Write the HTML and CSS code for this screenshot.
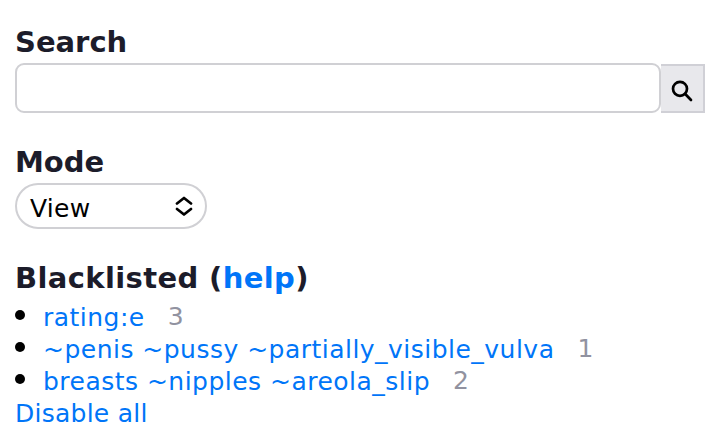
FILE: index.html
```html
<!DOCTYPE html>
<html lang="en">
<head>
<meta charset="utf-8">
<title>Sidebar</title>
<link rel="stylesheet" href="styles.css">
</head>
<body>
<aside class="sidebar">
  <section class="search">
    <h2>Search</h2>
    <form class="search-form">
      <input class="search-input" type="text" aria-label="Search">
      <button class="search-button" type="button" aria-label="Submit">
        <svg viewBox="0 0 22 22" width="22" height="22"><circle cx="9" cy="8.800" r="7"/><path d="M14.200 14l5.800 6"/></svg>
      </button>
    </form>
  </section>
  <section class="mode">
    <h2>Mode</h2>
    <div class="select"><span class="value">View</span>
      <svg viewBox="0 0 18 20" width="18" height="20"><path d="M2 7.500L9 2l7 5.500M2 13l7 5.500 7-5.500"/></svg>
    </div>
  </section>
  <section class="blacklist">
    <h2>Blacklisted (<a href="#">help</a>)</h2>
    <ul>
      <li><a href="#">rating:e</a><span class="count">3</span></li>
      <li><a href="#">~penis ~pussy ~partially_visible_vulva</a><span class="count">1</span></li>
      <li><a href="#">breasts ~nipples ~areola_slip</a><span class="count">2</span></li>
    </ul>
    <a class="disable" href="#">Disable all</a>
  </section>
</aside>
</body>
</html>
```
FILE: styles.css
```css
* { box-sizing: border-box; }
body {
  margin: 0;
  background: #fff;
  color: #1c1c2a;
  font-family: Verdana, "DejaVu Sans", sans-serif;
  font-size: 25px;
  overflow: hidden;
}
.sidebar { padding: 22px 15px 0; }
h2 { margin: 0; font-size: 29px; line-height: 40px; height: 41px; white-space: nowrap; }
a { color: #0075f8; text-decoration: none; }
.search-form { display: flex; height: 50px; margin: 0; }
.search-input {
  flex: 1;
  min-width: 0;
  border: 2px solid #d0d0d4;
  border-radius: 9px;
  background: #fff;
}
.search-button {
  width: 44px;
  height: 49px;
  margin-top: 1px;
  padding: 4px 0 0;
  border: 2px solid #d0d0d6;
  border-left: 0;
  background: #e8e8ec;
  display: flex;
  align-items: center;
  justify-content: center;
}
svg { fill: none; stroke: #000; stroke-width: 2.7; stroke-linecap: round; stroke-linejoin: round; }
.mode { margin-top: 29px; }
.select {
  width: 192px;
  height: 46px;
  border: 2px solid #d0d0d4;
  border-radius: 23px;
  padding: 4px 12px 0 13px;
  display: flex;
  align-items: center;
  justify-content: space-between;
  color: #000;
}
.select svg { margin-top: -4px; }
.value { letter-spacing: 0.3px; }
.blacklist { margin-top: 29px; }
.blacklist h2 { height: 43px; letter-spacing: 0.37px; }
ul { list-style: none; margin: 0; padding: 0; }
li { display: flex; align-items: center; height: 32.3px; white-space: nowrap; letter-spacing: 0.48px; }
li::before { content: ""; width: 10px; height: 10px; border-radius: 50%; background: #000; margin: -5px 18px 0 0; }
.count { color: #9192a0; margin: -2px 0 0 23px; }
.disable { display: block; line-height: 32px; letter-spacing: 0.25px; }
```
